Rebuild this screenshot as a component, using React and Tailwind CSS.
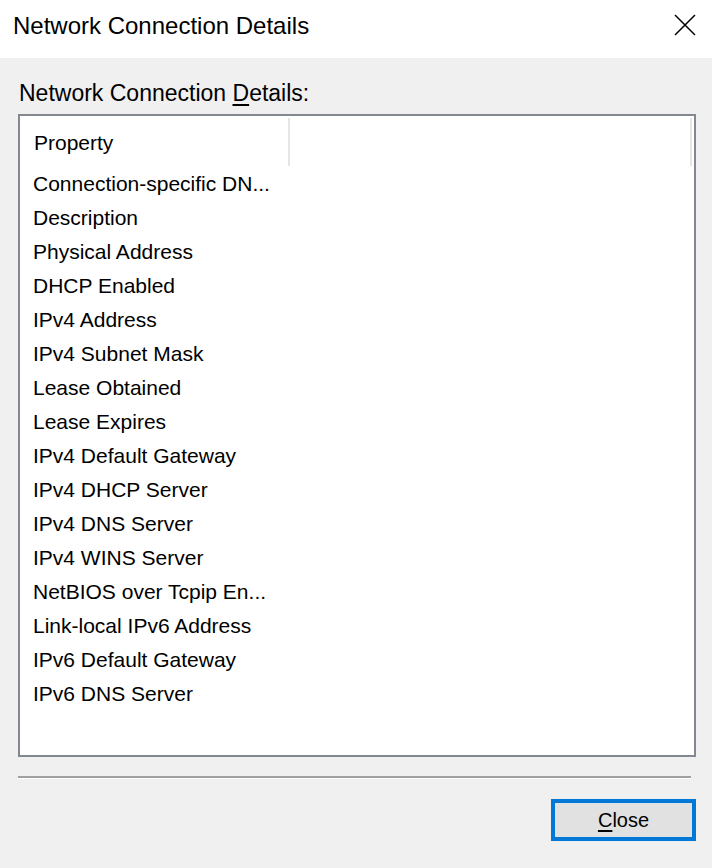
import React from "react"

const rows = [
  "Connection-specific DN...",
  "Description",
  "Physical Address",
  "DHCP Enabled",
  "IPv4 Address",
  "IPv4 Subnet Mask",
  "Lease Obtained",
  "Lease Expires",
  "IPv4 Default Gateway",
  "IPv4 DHCP Server",
  "IPv4 DNS Server",
  "IPv4 WINS Server",
  "NetBIOS over Tcpip En...",
  "Link-local IPv6 Address",
  "IPv6 Default Gateway",
  "IPv6 DNS Server",
]

export default function App() {
  return (
    <div
      className="w-[712px] h-[868px] bg-[#f0f0f0] flex flex-col text-black overflow-hidden"
      style={{ fontFamily: '"Liberation Sans", Arial, sans-serif' }}
    >
      {/* Title bar */}
      <div className="h-[58px] bg-white flex items-center justify-between pl-[13px] pr-[16px] shrink-0">
        <span className="text-[24px] leading-none -mt-[6px]">Network Connection Details</span>
        <svg width="22" height="22" viewBox="0 0 22 22" className="-mt-[9px]">
          <path d="M1 1 L21 21 M21 1 L1 21" stroke="#000" strokeWidth="1.5" fill="none" />
        </svg>
      </div>

      <div className="flex flex-col pl-[18px] pr-[16px]">
        <div className="mt-[21px] h-[28px] flex items-center pl-[1px] text-[23px] leading-none">
          <span>
            Network Connection <span className="underline underline-offset-[3px]">D</span>etails:
          </span>
        </div>

        {/* List view */}
        <div className="mt-[7px] h-[643px] border-2 border-[#828790] bg-white flex flex-col">
          <div className="h-[50px] pt-[2px] flex shrink-0">
            <div className="w-[270px] h-[48px] border-r-2 border-[#e5e5e5] flex items-center pl-[14px] text-[21px] leading-none">
              Property
            </div>
            <div className="w-[402px] h-[48px] border-r-2 border-[#e5e5e5]" />
          </div>
          {rows.map((r) => (
            <div key={r} className="h-[34px] flex items-center pl-[13px] text-[21px] leading-none whitespace-nowrap">
              {r}
            </div>
          ))}
        </div>

        {/* Separator */}
        <div className="mt-[19px] w-[673px] border-t-2 border-[#a0a0a0] border-b border-b-white" />

        {/* Close button */}
        <div className="flex justify-end mt-[20px]">
          <button className="w-[145px] h-[42px] border-4 border-[#0078d7] bg-[#e1e1e1] flex items-center justify-center text-[20px] leading-none">
            <span>
              <span className="underline underline-offset-[3px]">C</span>lose
            </span>
          </button>
        </div>
      </div>
    </div>
  )
}
